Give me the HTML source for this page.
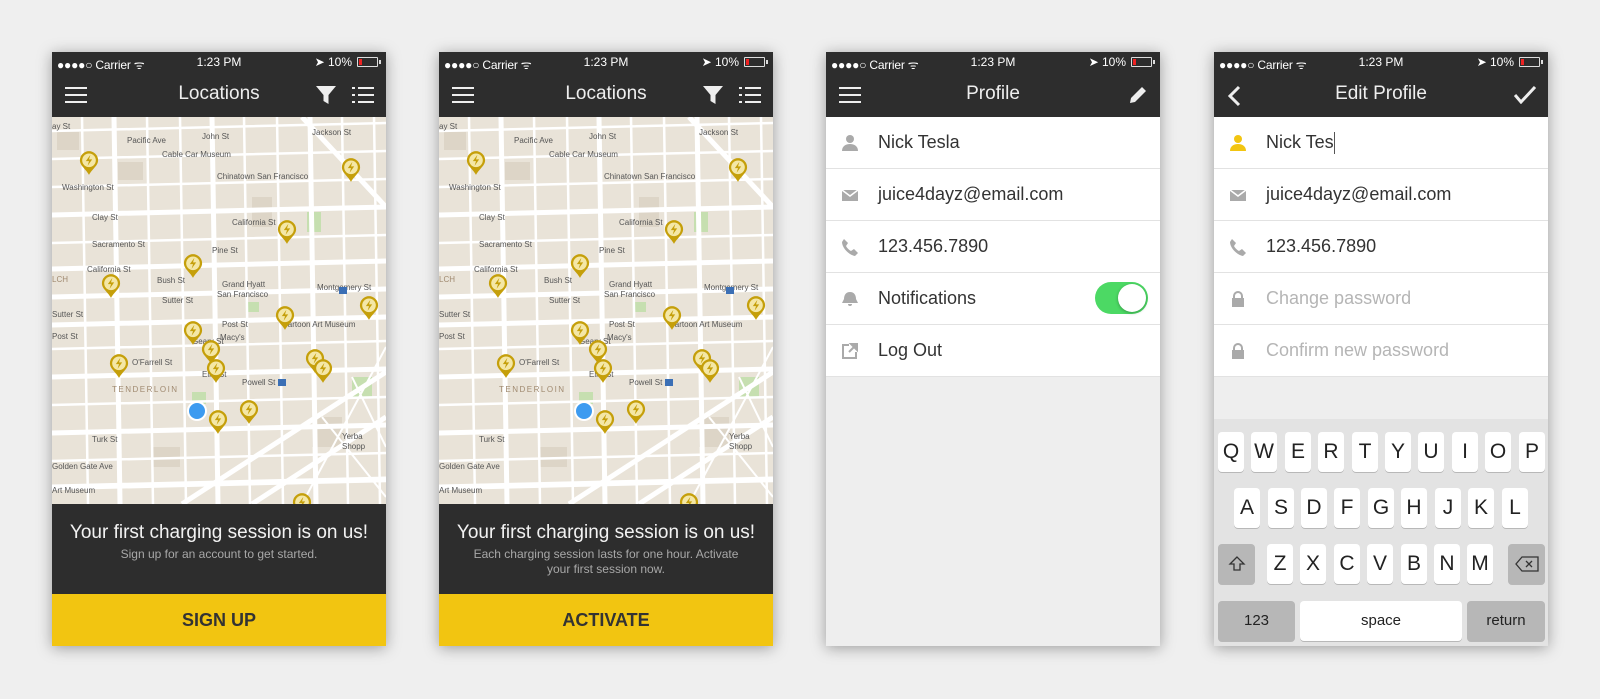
<!DOCTYPE html>
<html><head><meta charset="utf-8"><style>
*{margin:0;padding:0;box-sizing:border-box}
body{width:1600px;height:699px;background:#efefef;font-family:"Liberation Sans",sans-serif;position:relative;overflow:hidden}
.ph{position:absolute;top:52px;width:334px;height:594px;background:#eeeeee;box-shadow:0 2px 14px rgba(0,0,0,.35);overflow:hidden}
.sb{position:absolute;top:0;left:0;right:0;height:21px;background:#2d2d2d;color:#fff;font-size:12px}
.sb .l{position:absolute;left:5px;top:4px;letter-spacing:-.2px}
.sb .c{position:absolute;left:0;right:0;text-align:center;top:3px}
.sb .r{position:absolute;right:34px;top:3px}
.bat{position:absolute;right:8px;top:5px;width:21px;height:10px;border:1px solid #ddd;border-radius:1px}
.bat:before{content:"";position:absolute;left:1px;top:1px;width:3px;height:6px;background:#e22}
.bat:after{content:"";position:absolute;right:-4px;top:2px;width:2px;height:4px;background:#ddd}
.nav{position:absolute;top:21px;left:0;right:0;height:44px;background:#2d2d2d;color:#eee;font-size:19px;text-align:center;line-height:42px}
.ham{position:absolute;left:13px;top:14px;width:22px;height:16px;border-top:2px solid #eee;border-bottom:2px solid #eee}
.ham:after{content:"";position:absolute;left:0;right:0;top:5px;height:2px;background:#eee}
.map{position:absolute;top:65px;left:0;width:334px;height:387px}
.panel{position:absolute;top:452px;left:0;right:0;height:90px;background:#2d2d2d;text-align:center;color:#f2f2f2}
.panel h2{font-weight:normal;font-size:19px;margin-top:18px}
.panel p{font-size:12px;color:#a8a8a8;margin-top:3px;line-height:15px;padding:0 30px}
.btn{position:absolute;top:542px;left:0;right:0;height:52px;background:#f2c511;color:#333;font-weight:bold;font-size:18px;text-align:center;line-height:52px}
.row{position:absolute;left:0;right:0;height:52px;background:#fff;border-bottom:1px solid #e2e2e2;font-size:18px;color:#333;line-height:50px;padding-left:52px}
.row svg{position:absolute;left:15px;top:17px}
.ph .ph2{color:#b5b5b5}
.kb{position:absolute;top:367px;left:0;right:0;height:227px;background:#e3e3e3}
.k{position:absolute;width:26px;height:40px;background:#fff;border-radius:4px;box-shadow:0 1px 0 #b8b8b8;font-size:21px;text-align:center;line-height:40px;color:#222}
.k.g{background:#b7b7b7;font-size:15px}
</style></head><body>

<svg width="0" height="0" style="position:absolute">
<defs>
<symbol id="pin" viewBox="0 0 22 28"><path d="M11 1a10 10 0 0 1 10 10c0 6-6 9-10 16C7 20 1 17 1 11A10 10 0 0 1 11 1z" fill="#c59f0a"/><circle cx="11" cy="11" r="7.5" fill="#f4e7a6"/><path d="M12.5 5 7.5 12h3.5l-1.5 5 5-7h-3.5z" fill="#c59f0a"/></symbol>
<symbol id="mp" viewBox="0 0 334 387">
<rect width="334" height="387" fill="#e9e3d8"/>
<g fill="#ddd5c7"><rect x="5" y="15" width="22" height="18"/><rect x="66" y="45" width="25" height="18"/><rect x="200" y="80" width="20" height="30"/><rect x="100" y="330" width="28" height="20"/><rect x="260" y="300" width="30" height="30"/></g>
<g fill="#c6dfb0"><rect x="255" y="95" width="14" height="20"/><rect x="140" y="275" width="14" height="12"/><rect x="300" y="260" width="20" height="20"/><rect x="195" y="185" width="12" height="10"/></g>
<g stroke="#fff" fill="none">
<g stroke-width="2.5">
<path d="M0 14 334 6M0 42 334 34M0 70 334 62M0 126 334 118M0 232 334 224M0 288 334 280M0 344 334 336M0 372 334 364"/>
<path d="M30 0 36 387M95 0 101 387M128 0 134 387M192 0 198 387M225 0 231 387M290 0 296 387M322 0 328 387"/>
</g>
<g stroke-width="5">
<path d="M0 98 334 90M0 152 334 144M0 180 334 172M0 208 334 200M0 260 334 252M0 316 334 308M0 370 334 362"/>
<path d="M62 0 68 387M160 0 166 387M258 0 264 387"/>
<path d="M334 255 130 387M334 300 200 387M250 0 334 90"/>
</g>
<g stroke-width="2"><path d="M334 230 250 387M300 260 334 330M270 300 334 380"/></g>
</g>
<g font-family="Liberation Sans,sans-serif" font-size="8" fill="#555">
<text x="0" y="12">ay St</text><text x="75" y="26">Pacific Ave</text><text x="150" y="22">John St</text><text x="260" y="18">Jackson St</text>
<text x="110" y="40">Cable Car Museum</text><text x="165" y="62">Chinatown San Francisco</text>
<text x="10" y="73">Washington St</text><text x="40" y="103">Clay St</text><text x="40" y="130">Sacramento St</text>
<text x="35" y="155">California St</text><text x="180" y="108">California St</text><text x="160" y="136">Pine St</text>
<text x="0" y="165" fill="#a08a70">LCH</text><text x="105" y="166">Bush St</text><text x="170" y="170">Grand Hyatt</text><text x="165" y="180">San Francisco</text>
<text x="110" y="186">Sutter St</text><text x="0" y="200">Sutter St</text><text x="0" y="222">Post St</text><text x="170" y="210">Post St</text>
<text x="265" y="173">Montgomery St</text><text x="140" y="227">Geary St</text><text x="230" y="210">Cartoon Art Museum</text><text x="168" y="223">Macy's</text>
<text x="80" y="248">O'Farrell St</text><text x="150" y="260">Ellis St</text><text x="190" y="268">Powell St</text>
<text x="60" y="275" fill="#a08a70" letter-spacing="1.5">TENDERLOIN</text>
<text x="40" y="325">Turk St</text><text x="0" y="352">Golden Gate Ave</text><text x="0" y="376">Art Museum</text>
<text x="290" y="322">Yerba</text><text x="290" y="332">Shopp</text>
</g>
</symbol>
<symbol id="pins" viewBox="0 0 334 387">
<use href="#mp" width="334" height="387"/>
<g>
<use href="#pin" x="27" y="33" width="20" height="26"/><use href="#pin" x="289" y="40" width="20" height="26"/>
<use href="#pin" x="225" y="102" width="20" height="26"/><use href="#pin" x="131" y="136" width="20" height="26"/>
<use href="#pin" x="49" y="156" width="20" height="26"/><use href="#pin" x="307" y="178" width="20" height="26"/>
<use href="#pin" x="223" y="188" width="20" height="26"/><use href="#pin" x="131" y="203" width="20" height="26"/>
<use href="#pin" x="149" y="222" width="20" height="26"/><use href="#pin" x="57" y="236" width="20" height="26"/>
<use href="#pin" x="154" y="241" width="20" height="26"/><use href="#pin" x="253" y="231" width="20" height="26"/>
<use href="#pin" x="261" y="241" width="20" height="26"/><use href="#pin" x="187" y="282" width="20" height="26"/>
<use href="#pin" x="156" y="292" width="20" height="26"/><use href="#pin" x="240" y="375" width="20" height="26"/>
</g>
<circle cx="145" cy="294" r="10" fill="#fff"/><circle cx="145" cy="294" r="8" fill="#3d9bf0"/>
<rect x="287" y="170" width="8" height="7" fill="#3b6fb5"/><rect x="226" y="262" width="8" height="7" fill="#3b6fb5"/>
</symbol>
</defs></svg>

<!-- Phone 1 -->
<div class="ph" style="left:52px">
<div class="sb"><span class="l">●●●●○ Carrier ᯤ</span><div class="c">1:23 PM</div><span class="r">➤ 10%</span><div class="bat"></div></div>
<div class="nav"><div class="ham"></div>Locations
<svg style="position:absolute;right:50px;top:13px" width="20" height="18" viewBox="0 0 20 18"><path d="M0 0h20l-7.5 9v9l-5-3V9z" fill="#eee"/></svg>
<svg style="position:absolute;right:12px;top:14px" width="22" height="16" viewBox="0 0 22 16"><g fill="#eee"><rect x="0" y="0" width="3" height="2"/><rect x="0" y="7" width="3" height="2"/><rect x="0" y="14" width="3" height="2"/><rect x="6" y="0" width="16" height="2"/><rect x="6" y="7" width="16" height="2"/><rect x="6" y="14" width="16" height="2"/></g></svg></div>
<svg class="map" viewBox="0 0 334 387"><use href="#pins" width="334" height="387"/></svg>
<div class="panel"><h2>Your first charging session is on us!</h2><p>Sign up for an account to get started.</p></div>
<div class="btn">SIGN UP</div>
</div>

<!-- Phone 2 -->
<div class="ph" style="left:439px">
<div class="sb"><span class="l">●●●●○ Carrier ᯤ</span><div class="c">1:23 PM</div><span class="r">➤ 10%</span><div class="bat"></div></div>
<div class="nav"><div class="ham"></div>Locations
<svg style="position:absolute;right:50px;top:13px" width="20" height="18" viewBox="0 0 20 18"><path d="M0 0h20l-7.5 9v9l-5-3V9z" fill="#eee"/></svg>
<svg style="position:absolute;right:12px;top:14px" width="22" height="16" viewBox="0 0 22 16"><g fill="#eee"><rect x="0" y="0" width="3" height="2"/><rect x="0" y="7" width="3" height="2"/><rect x="0" y="14" width="3" height="2"/><rect x="6" y="0" width="16" height="2"/><rect x="6" y="7" width="16" height="2"/><rect x="6" y="14" width="16" height="2"/></g></svg></div>
<svg class="map" viewBox="0 0 334 387"><use href="#pins" width="334" height="387"/></svg>
<div class="panel"><h2>Your first charging session is on us!</h2><p>Each charging session lasts for one hour. Activate your first session now.</p></div>
<div class="btn">ACTIVATE</div>
</div>

<!-- Phone 3 -->
<div class="ph" style="left:826px">
<div class="sb"><span class="l">●●●●○ Carrier ᯤ</span><div class="c">1:23 PM</div><span class="r">➤ 10%</span><div class="bat"></div></div>
<div class="nav"><div class="ham"></div>Profile
<svg style="position:absolute;right:13px;top:13px" width="17" height="17" viewBox="0 0 17 17"><path d="M0 17l1-5L12 1l4 4L5 16z" fill="#eee"/></svg></div>
<div class="row" style="top:65px"><svg width="18" height="18" viewBox="0 0 18 18"><circle cx="9" cy="5" r="4" fill="#aaa"/><path d="M1 17c0-5 4-7 8-7s8 2 8 7z" fill="#aaa"/></svg>Nick Tesla</div>
<div class="row" style="top:117px"><svg width="18" height="18" viewBox="0 0 18 18"><path d="M1 4h16v11H1z" fill="#aaa"/><path d="M1 4l8 6 8-6" stroke="#fff" stroke-width="1.5" fill="none"/></svg>juice4dayz@email.com</div>
<div class="row" style="top:169px"><svg width="18" height="18" viewBox="0 0 18 18"><path d="M3 1l4 4-2 3c1 2 3 4 5 5l3-2 4 4-3 3C8 17 1 10 1 4z" fill="#aaa"/></svg>123.456.7890</div>
<div class="row" style="top:221px"><svg width="18" height="18" viewBox="0 0 18 18"><path d="M9 2c-4 0-6 3-6 7l-2 4h16l-2-4c0-4-2-7-6-7zM7 14a2 2 0 0 0 4 0z" fill="#aaa"/></svg>Notifications
<div style="position:absolute;left:269px;top:9px;width:53px;height:32px;border-radius:16px;background:#4cd964"><div style="position:absolute;right:2px;top:2px;width:28px;height:28px;border-radius:50%;background:#fff;box-shadow:0 1px 3px rgba(0,0,0,.3)"></div></div></div>
<div class="row" style="top:273px"><svg width="18" height="18" viewBox="0 0 18 18"><path d="M8 3H2v13h13v-6" stroke="#aaa" stroke-width="2" fill="none"/><path d="M10 2h6v6zM15 3 8 10" stroke="#aaa" stroke-width="2" fill="#aaa"/></svg>Log Out</div>
</div>

<!-- Phone 4 -->
<div class="ph" style="left:1214px">
<div class="sb"><span class="l">●●●●○ Carrier ᯤ</span><div class="c">1:23 PM</div><span class="r">➤ 10%</span><div class="bat"></div></div>
<div class="nav">Edit Profile
<svg style="position:absolute;left:13px;top:12px" width="14" height="22" viewBox="0 0 14 22"><path d="M12 2 3 11l9 9" stroke="#eee" stroke-width="3" fill="none"/></svg>
<svg style="position:absolute;right:12px;top:13px" width="22" height="18" viewBox="0 0 22 18"><path d="M1 9l6 7L21 1" stroke="#eee" stroke-width="3" fill="none"/></svg></div>
<div class="row" style="top:65px"><svg width="18" height="18" viewBox="0 0 18 18"><circle cx="9" cy="5" r="4" fill="#f2c511"/><path d="M1 17c0-5 4-7 8-7s8 2 8 7z" fill="#f2c511"/></svg>Nick Tes<span style="display:inline-block;width:1px;height:22px;background:#555;vertical-align:middle"></span></div>
<div class="row" style="top:117px"><svg width="18" height="18" viewBox="0 0 18 18"><path d="M1 4h16v11H1z" fill="#aaa"/><path d="M1 4l8 6 8-6" stroke="#fff" stroke-width="1.5" fill="none"/></svg>juice4dayz@email.com</div>
<div class="row" style="top:169px"><svg width="18" height="18" viewBox="0 0 18 18"><path d="M3 1l4 4-2 3c1 2 3 4 5 5l3-2 4 4-3 3C8 17 1 10 1 4z" fill="#aaa"/></svg>123.456.7890</div>
<div class="row ph2" style="top:221px"><svg width="18" height="18" viewBox="0 0 18 18"><path d="M5 8V6a4 4 0 0 1 8 0v2" stroke="#aaa" stroke-width="2" fill="none"/><rect x="3" y="8" width="12" height="9" fill="#aaa"/></svg>Change password</div>
<div class="row ph2" style="top:273px"><svg width="18" height="18" viewBox="0 0 18 18"><path d="M5 8V6a4 4 0 0 1 8 0v2" stroke="#aaa" stroke-width="2" fill="none"/><rect x="3" y="8" width="12" height="9" fill="#aaa"/></svg>Confirm new password</div>
<div class="kb">
<div class="k" style="left:4px;top:13px">Q</div><div class="k" style="left:37px;top:13px">W</div><div class="k" style="left:71px;top:13px">E</div><div class="k" style="left:104px;top:13px">R</div><div class="k" style="left:138px;top:13px">T</div><div class="k" style="left:171px;top:13px">Y</div><div class="k" style="left:204px;top:13px">U</div><div class="k" style="left:238px;top:13px">I</div><div class="k" style="left:271px;top:13px">O</div><div class="k" style="left:305px;top:13px">P</div>
<div class="k" style="left:20px;top:69px">A</div><div class="k" style="left:54px;top:69px">S</div><div class="k" style="left:87px;top:69px">D</div><div class="k" style="left:120px;top:69px">F</div><div class="k" style="left:154px;top:69px">G</div><div class="k" style="left:187px;top:69px">H</div><div class="k" style="left:221px;top:69px">J</div><div class="k" style="left:254px;top:69px">K</div><div class="k" style="left:288px;top:69px">L</div>
<div class="k g" style="left:4px;top:125px;width:37px"><svg width="18" height="18" viewBox="0 0 18 18" style="margin-top:11px"><path d="M9 2 2 9h4v6h6V9h4z" stroke="#333" stroke-width="1.3" fill="none"/></svg></div>
<div class="k" style="left:53px;top:125px">Z</div><div class="k" style="left:86px;top:125px">X</div><div class="k" style="left:120px;top:125px">C</div><div class="k" style="left:153px;top:125px">V</div><div class="k" style="left:187px;top:125px">B</div><div class="k" style="left:220px;top:125px">N</div><div class="k" style="left:253px;top:125px">M</div>
<div class="k g" style="left:294px;top:125px;width:37px"><svg width="24" height="16" viewBox="0 0 24 16" style="margin-top:12px"><path d="M7 1h16v14H7L1 8z" stroke="#333" stroke-width="1.3" fill="none"/><path d="M11 5l6 6M17 5l-6 6" stroke="#333" stroke-width="1.3"/></svg></div>
<div class="k g" style="left:4px;top:182px;width:77px">123</div>
<div class="k" style="left:86px;top:182px;width:162px;font-size:15px">space</div>
<div class="k g" style="left:253px;top:182px;width:78px">return</div>
</div>
</div>
</body></html>
